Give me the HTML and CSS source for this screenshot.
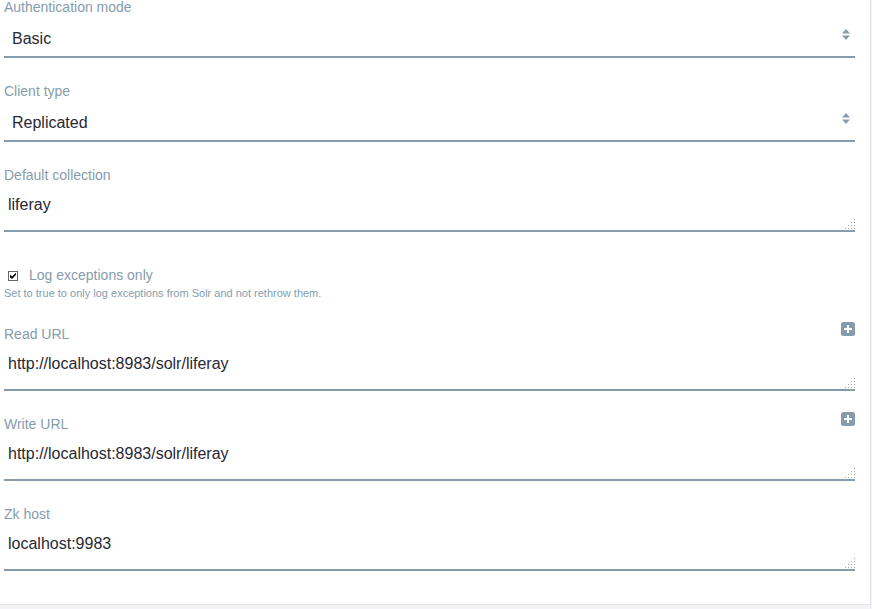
FILE: index.html
```html
<!DOCTYPE html>
<html>
<head>
<meta charset="utf-8">
<link rel="stylesheet" href="styles.css">
</head>
<body>
<div class="card">
  <div class="field">
    <div class="label-row"><span class="label">Authentication mode</span></div>
    <div class="select"><span class="value">Basic</span>
      <svg class="arrows" width="8" height="11" viewBox="0 0 8 11"><path d="M4 0 L8 4.5 L0 4.5 Z M0 6.5 L8 6.5 L4 11 Z" fill="#869cad"/></svg>
    </div>
  </div>
  <div class="field">
    <div class="label-row"><span class="label">Client type</span></div>
    <div class="select"><span class="value">Replicated</span>
      <svg class="arrows" width="8" height="11" viewBox="0 0 8 11"><path d="M4 0 L8 4.5 L0 4.5 Z M0 6.5 L8 6.5 L4 11 Z" fill="#869cad"/></svg>
    </div>
  </div>
  <div class="field">
    <div class="label-row"><span class="label">Default collection</span></div>
    <div class="textarea"><span class="value">liferay</span>
      <svg class="grip" width="10" height="10" viewBox="0 0 10 10"><g fill="#a9a9a9"><rect x="9" y="0" width="1" height="1"/><rect x="9" y="3" width="1" height="1"/><rect x="6" y="3" width="1" height="1"/><rect x="9" y="6" width="1" height="1"/><rect x="6" y="6" width="1" height="1"/><rect x="3" y="6" width="1" height="1"/><rect x="9" y="9" width="1" height="1"/><rect x="6" y="9" width="1" height="1"/><rect x="3" y="9" width="1" height="1"/><rect x="0" y="9" width="1" height="1"/></g></svg>
    </div>
  </div>
  <div class="check-group">
    <div class="check-row">
      <svg class="checkbox" width="10" height="10" viewBox="0 0 10 10"><rect x="0.5" y="0.5" width="9" height="9" fill="#fff" stroke="#666"/><path d="M2 3.5 L4 5.5 L8 1.8 L8 3.8 L4 8 L2 6.2 Z" fill="#000"/></svg>
      <span class="check-label">Log exceptions only</span>
    </div>
    <div class="help">Set to true to only log exceptions from Solr and not rethrow them.</div>
  </div>
  <div class="field">
    <div class="label-row"><span class="label">Read URL</span>
      <svg class="plus" width="14" height="14" viewBox="0 0 14 14"><rect width="14" height="14" rx="2.5" fill="#869cad"/><path d="M7 3 V11 M3 7 H11" stroke="#fff" stroke-width="2"/></svg>
    </div>
    <div class="textarea"><span class="value">http://localhost:8983/solr/liferay</span>
      <svg class="grip" width="10" height="10" viewBox="0 0 10 10"><g fill="#a9a9a9"><rect x="9" y="0" width="1" height="1"/><rect x="9" y="3" width="1" height="1"/><rect x="6" y="3" width="1" height="1"/><rect x="9" y="6" width="1" height="1"/><rect x="6" y="6" width="1" height="1"/><rect x="3" y="6" width="1" height="1"/><rect x="9" y="9" width="1" height="1"/><rect x="6" y="9" width="1" height="1"/><rect x="3" y="9" width="1" height="1"/><rect x="0" y="9" width="1" height="1"/></g></svg>
    </div>
  </div>
  <div class="field">
    <div class="label-row"><span class="label">Write URL</span>
      <svg class="plus" width="14" height="14" viewBox="0 0 14 14"><rect width="14" height="14" rx="2.5" fill="#869cad"/><path d="M7 3 V11 M3 7 H11" stroke="#fff" stroke-width="2"/></svg>
    </div>
    <div class="textarea"><span class="value">http://localhost:8983/solr/liferay</span>
      <svg class="grip" width="10" height="10" viewBox="0 0 10 10"><g fill="#a9a9a9"><rect x="9" y="0" width="1" height="1"/><rect x="9" y="3" width="1" height="1"/><rect x="6" y="3" width="1" height="1"/><rect x="9" y="6" width="1" height="1"/><rect x="6" y="6" width="1" height="1"/><rect x="3" y="6" width="1" height="1"/><rect x="9" y="9" width="1" height="1"/><rect x="6" y="9" width="1" height="1"/><rect x="3" y="9" width="1" height="1"/><rect x="0" y="9" width="1" height="1"/></g></svg>
    </div>
  </div>
  <div class="field last">
    <div class="label-row"><span class="label">Zk host</span></div>
    <div class="textarea"><span class="value">localhost:9983</span>
      <svg class="grip" width="10" height="10" viewBox="0 0 10 10"><g fill="#a9a9a9"><rect x="9" y="0" width="1" height="1"/><rect x="9" y="3" width="1" height="1"/><rect x="6" y="3" width="1" height="1"/><rect x="9" y="6" width="1" height="1"/><rect x="6" y="6" width="1" height="1"/><rect x="3" y="6" width="1" height="1"/><rect x="9" y="9" width="1" height="1"/><rect x="6" y="9" width="1" height="1"/><rect x="3" y="9" width="1" height="1"/><rect x="0" y="9" width="1" height="1"/></g></svg>
    </div>
  </div>
</div>
</body>
</html>
```
FILE: styles.css
```css
html, body {
  margin: 0;
  padding: 0;
  background: #f3f3f5;
  font-family: "Liberation Sans", Arial, sans-serif;
}
.card {
  box-sizing: border-box;
  width: 871px;
  height: 605px;
  background: #fff;
  border-right: 1px solid #e3e3e8;
  border-bottom: 1px solid #e3e3e8;
  padding: 0 15px 0 4px;
}
.field {
  margin-bottom: 26px;
}
.label-row {
  display: flex;
  justify-content: space-between;
  height: 14px;
}
.label {
  font-size: 14px;
  line-height: 15px;
  color: #869cad;
}
.plus {
  margin-top: -5px;
}
.select {
  box-sizing: border-box;
  height: 44px;
  border-bottom: 2px solid #869cad;
  padding: 7px 5px 0 8px;
  display: flex;
  align-items: center;
  justify-content: space-between;
}
.value {
  font-size: 16px;
  line-height: 36px;
  color: #272833;
}
.select .value {
  line-height: 36px;
  align-self: flex-start;
}
.arrows {
  margin-top: -8px;
}
.textarea {
  box-sizing: border-box;
  height: 50px;
  border-bottom: 2px solid #869cad;
  padding: 5px 0 0 4px;
  display: flex;
  justify-content: space-between;
}
.textarea .value {
  align-self: flex-start;
}
.grip {
  align-self: flex-end;
  margin-bottom: 1px;
}
.check-group {
  padding-top: 9px;
  margin-bottom: 27px;
}
.check-row {
  display: flex;
  align-items: center;
  height: 17px;
  padding-left: 4px;
}
.checkbox {
  margin-right: 11px;
}
.check-label {
  font-size: 14px;
  line-height: 17px;
  color: #869cad;
}
.help {
  margin-top: 3px;
  font-size: 11px;
  line-height: 13px;
  color: #869cad;
}
.last {
  margin-bottom: 0;
}
```
